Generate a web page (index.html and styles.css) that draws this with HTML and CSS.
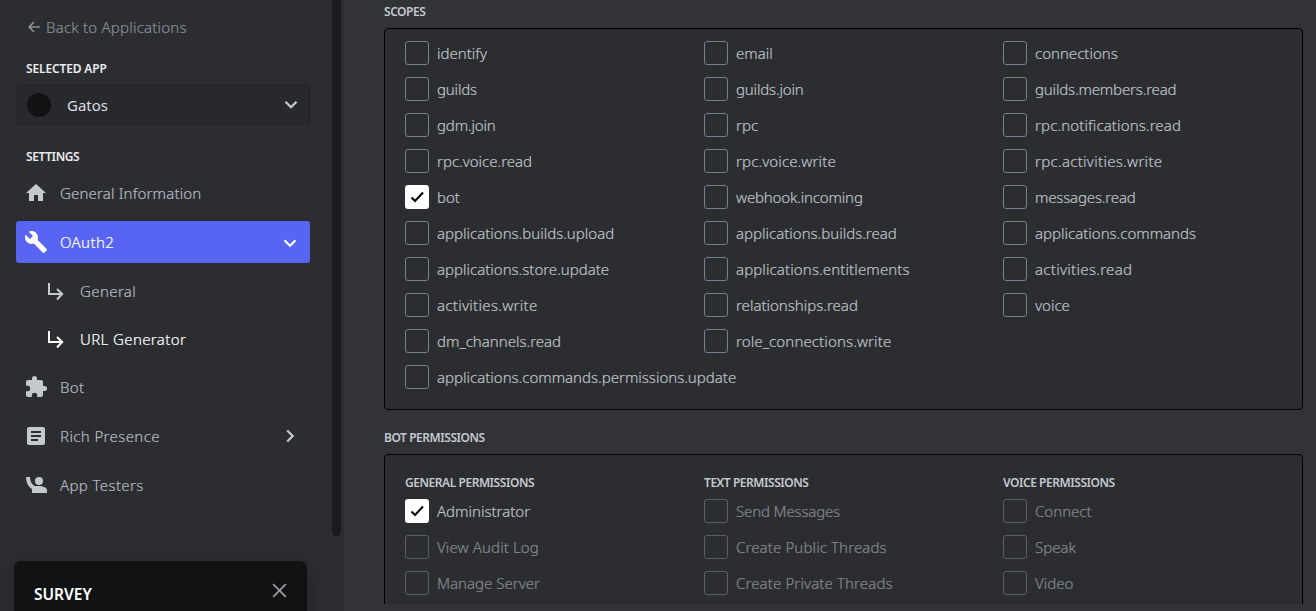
FILE: index.html
```html
<!DOCTYPE html>
<html lang="en">
<head>
<meta charset="utf-8">
<title>URL Generator</title>
<link rel="stylesheet" href="styles.css">
</head>
<body>
<div class="app">
  <aside class="sidebar">
    <a class="back"><svg class="back-icon" width="12" height="12" viewBox="0 0 12 12"><path d="M6 1 1.2 6 6 11M1.2 6H12" fill="none" stroke="currentColor" stroke-width="1.7"/></svg><span>Back to Applications</span></a>
    <h2 class="label side-label">SELECTED APP</h2>
    <div class="picker"><span class="avatar"></span><span class="picker-name">Gatos</span><svg width="14" height="10" viewBox="0 0 14 10"><path d="m1.5 1.7 5.5 5.5 5.5-5.5" fill="none" stroke="currentColor" stroke-width="2.3"/></svg></div>
    <h2 class="label side-label settings">SETTINGS</h2>
    <nav class="nav">
      <a class="item info"><svg class="icon" viewBox="0 0 24 24"><path d="M10 20v-6h4v6h5v-8h3L12 3 2 12h3v8z"/></svg><span>General Information</span></a>
      <a class="item active"><svg class="icon" viewBox="0 0 24 24"><path d="M22.7 19l-9.1-9.1c.9-2.3.4-5-1.5-6.9-2-2-5-2.4-7.4-1.3L9 6 6 9 1.6 4.7C.4 7.1.9 10.1 2.9 12.1c1.9 1.9 4.6 2.4 6.9 1.5l9.1 9.1c.4.4 1 .4 1.4 0l2.3-2.3c.5-.4.5-1.1.1-1.4z"/></svg><span>OAuth2</span><svg class="chev down" viewBox="0 0 14 14"><path d="m1.5 4.2 5.5 5.5 5.5-5.5"/></svg></a>
      <a class="item sub"><svg class="turn" viewBox="0 0 16 18"><path d="M1 0v11h13M9 6l5.2 5L9 16.5"/></svg><span>General</span></a>
      <a class="item sub current"><svg class="turn" viewBox="0 0 16 18"><path d="M1 0v11h13M9 6l5.2 5L9 16.5"/></svg><span>URL Generator</span></a>
      <a class="item"><svg class="icon" viewBox="0 0 24 24"><path d="M20.5 11H19V7c0-1.1-.9-2-2-2h-4V3.5a2.5 2.5 0 0 0-5 0V5H4c-1.1 0-2 .9-2 2v3.8h1.5a2.7 2.7 0 0 1 0 5.4H2V20c0 1.1.9 2 2 2h3.8v-1.5a2.7 2.7 0 0 1 5.4 0V22H17c1.1 0 2-.9 2-2v-4h1.5a2.5 2.5 0 0 0 0-5z"/></svg><span>Bot</span></a>
      <a class="item"><svg class="icon" viewBox="0 0 24 24"><path d="M19 3H5a2 2 0 0 0-2 2v14c0 1.1.9 2 2 2h14a2 2 0 0 0 2-2V5a2 2 0 0 0-2-2zm-5 14H7v-2h7zm3-4H7v-2h10zm0-4H7V7h10z"/></svg><span>Rich Presence</span><svg class="chev right" viewBox="0 0 14 14"><path d="m4.2 1.5 5.5 5.5-5.5 5.5"/></svg></a>
      <a class="item"><svg class="icon" viewBox="0 0 24 24"><circle cx="15" cy="8" r="4"/><path d="M2 4h4c0 4.5 2 7.7 5 9.3 1.2-.2 2.7-.3 4-.3 2.7 0 8 1.3 8 4v3H8v-4C4 13.5 2 9 2 4z"/></svg><span>App Testers</span></a>
    </nav>
    <div class="scrollbar"></div>
    <section class="survey"><h2>SURVEY</h2><svg width="15" height="15" viewBox="0 0 15 15"><path d="m1.2 1.2 12.6 12.6M13.8 1.2 1.2 13.8"/></svg></section>
  </aside>
  <main class="main">
    <h2 class="label scopes-label">SCOPES</h2>
    <section class="box scopes">
      <label class="option"><i class="check"></i>identify</label>
      <label class="option"><i class="check"></i>email</label>
      <label class="option"><i class="check"></i>connections</label>
      <label class="option snug"><i class="check"></i>guilds</label>
      <label class="option snug"><i class="check"></i>guilds.join</label>
      <label class="option snug"><i class="check"></i>guilds.members.read</label>
      <label class="option snug"><i class="check"></i>gdm.join</label>
      <label class="option"><i class="check"></i>rpc</label>
      <label class="option loose"><i class="check"></i>rpc.notifications.read</label>
      <label class="option"><i class="check"></i>rpc.voice.read</label>
      <label class="option loose"><i class="check"></i>rpc.voice.write</label>
      <label class="option looser"><i class="check"></i>rpc.activities.write</label>
      <label class="option"><i class="check on"><svg viewBox="0 0 24 24"><path d="m6.5 12.500 3.500 3.500 8-8.500"/></svg></i>bot</label>
      <label class="option snug"><i class="check"></i>webhook.incoming</label>
      <label class="option snug"><i class="check"></i>messages.read</label>
      <label class="option"><i class="check"></i>applications.builds.upload</label>
      <label class="option"><i class="check"></i>applications.builds.read</label>
      <label class="option"><i class="check"></i>applications.commands</label>
      <label class="option"><i class="check"></i>applications.store.update</label>
      <label class="option loose"><i class="check"></i>applications.entitlements</label>
      <label class="option looser"><i class="check"></i>activities.read</label>
      <label class="option looser"><i class="check"></i>activities.write</label>
      <label class="option"><i class="check"></i>relationships.read</label>
      <label class="option"><i class="check"></i>voice</label>
      <label class="option"><i class="check"></i>dm_channels.read</label>
      <label class="option loose"><i class="check"></i>role_connections.write</label>
      <label class="option wide"><i class="check"></i>applications.commands.permissions.update</label>
    </section>
    <h2 class="label perms-label">BOT PERMISSIONS</h2>
    <section class="box perms">
      <h3 class="label">GENERAL PERMISSIONS</h3>
      <h3 class="label">TEXT PERMISSIONS</h3>
      <h3 class="label">VOICE PERMISSIONS</h3>
      <label class="option"><i class="check on"><svg viewBox="0 0 24 24"><path d="m6.5 12.500 3.500 3.500 8-8.500"/></svg></i>Administrator</label>
      <label class="option off snug"><i class="check"></i>Send Messages</label>
      <label class="option off"><i class="check"></i>Connect</label>
      <label class="option off loose"><i class="check"></i>View Audit Log</label>
      <label class="option off loose"><i class="check"></i>Create Public Threads</label>
      <label class="option off"><i class="check"></i>Speak</label>
      <label class="option off"><i class="check"></i>Manage Server</label>
      <label class="option off loose"><i class="check"></i>Create Private Threads</label>
      <label class="option off"><i class="check"></i>Video</label>
    </section>
  </main>
</div>
</body>
</html>
```
FILE: styles.css
```css
* { box-sizing: border-box; }
body { margin: 0; background: #313338; color: #bfc3c8; font: 300 15px/20px "Noto Sans", sans-serif; -webkit-text-stroke: .2px currentColor; }
h2, h3 { margin: 0; }
svg { flex: none; }
.app { display: flex; height: 611px; overflow: hidden; }
.label { font-size: 12px; font-weight: 600; line-height: 16px; letter-spacing: -.45px; color: #c4c9ce; white-space: nowrap; -webkit-text-stroke: 0; }

.sidebar { position: relative; flex: none; width: 344px; height: 611px; padding: 17px 34px 0 16px; background: #2c2d31; overflow: hidden; }
.back { display: flex; align-items: center; gap: 6px; height: 20px; padding-left: 12px; color: #878e97; letter-spacing: .21px; }
.side-label { margin: 24px 0 0 10px; color: #ebedef; letter-spacing: -.15px; }
.picker { display: flex; align-items: center; height: 40px; margin-top: 8px; padding: 0 11px 0 10px; border: 1px solid #232428; border-radius: 3px; background: #28292d; color: #c4c9ce; }
.avatar { width: 24px; height: 24px; border-radius: 50%; background: #111214; }
.picker-name { flex: 1; margin-left: 16px; font-weight: 400; color: #dcdee1; -webkit-text-stroke: 0; }
.settings { margin-top: 24px; letter-spacing: -.4px; }

.nav { margin-top: 7px; }
.item { display: flex; align-items: center; height: 42px; margin-bottom: 7px; padding: 0 13px 0 8px; border-radius: 3px; color: #b5bac0; letter-spacing: .38px; }
.info { letter-spacing: .17px; }
.item span { flex: 1; margin-left: 12px; }
.icon { width: 24px; height: 24px; fill: #c4c9ce; }
.active { background: #5865f2; color: #fff; }
.active .icon { fill: #fff; }
.chev { width: 14px; height: 14px; fill: none; stroke: currentColor; stroke-width: 2.2; }
.down { margin-top: 2px; }
.right { stroke: #c4c9ce; }
.sub { margin-bottom: 6px; padding-left: 32px; }
.sub span { margin-left: 16px; }
.turn { width: 16px; height: 18px; margin-top: 1px; fill: none; stroke: #c4c9ce; stroke-width: 2; }
.current { color: #fff; }
.current .turn { stroke: #fff; }

.scrollbar { position: absolute; top: -8px; right: 3px; width: 9px; height: 544px; border-radius: 4px; background: #1a1b1e; }
.survey { position: absolute; left: 14px; top: 561px; display: flex; align-items: flex-start; justify-content: space-between; width: 293px; height: 80px; padding: 22px 20px; border-radius: 7px; background: #111214; box-shadow: 0 4px 16px rgba(0, 0, 0, .2); }
.survey h2 { font-size: 15.5px; font-weight: 600; line-height: 22px; color: #fff; -webkit-text-stroke: 0; }
.survey svg { fill: none; stroke: #999b9e; stroke-width: 1.8; }

.main { flex: 1; height: 604px; padding: 4px 13px 0 40px; overflow: hidden; }
.box { display: grid; grid-template-columns: repeat(3, 279px); column-gap: 20px; row-gap: 12px; border: 1px solid #000; border-radius: 4px; background: #2c2d31; }
.scopes { margin-top: 8px; padding: 12px 20px 20px; }
.perms-label { margin-top: 20px; }
.perms { height: 200px; margin-top: 8px; padding: 20px; align-content: start; }
.perms h3 { margin-bottom: -4px; }
.option { display: flex; align-items: center; gap: 8px; height: 24px; white-space: nowrap; }
.snug { letter-spacing: -.16px; }
.loose { letter-spacing: .12px; }
.looser { letter-spacing: .3px; }
.wide { grid-column: 1 / 3; }
.check { width: 24px; height: 24px; flex: none; border: 1px solid #72808f; border-radius: 3px; }
.on { border: 0; background: #fff; }
.on svg { display: block; width: 24px; height: 24px; fill: none; stroke: #000; stroke-width: 2; }
.off { opacity: .6; }
```
